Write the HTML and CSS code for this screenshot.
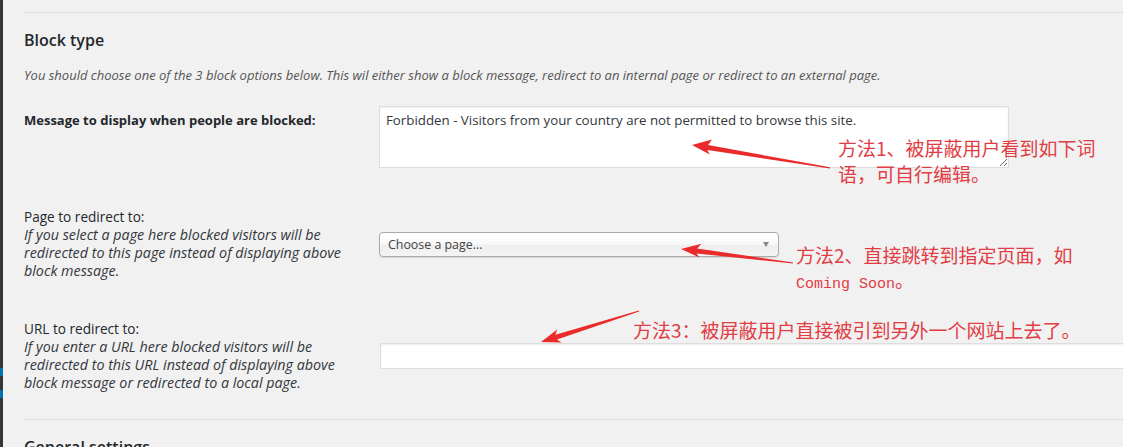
FILE: index.html
```html
<!DOCTYPE html>
<html lang="en">
<head>
    <meta charset="UTF-8">
    <title>Block type settings</title>
    <link rel="stylesheet" href="styles.css">
</head>
<body>
    <div class="admin-menu">
        <span class="menu-mark"></span>
        <span class="menu-mark"></span>
    </div>

    <div class="wrap">
        <hr class="divider">
        <h2 class="section-title">Block type</h2>
        <p class="section-desc">You should choose one of the 3 block options below. This wil either show a block message, redirect to an internal page or redirect to an external page.</p>

        <div class="form-table">
            <div class="field-label field-label-top"><strong>Message to display when people are blocked:</strong></div>
            <div class="field">
                <textarea class="message-box">Forbidden - Visitors from your country are not permitted to browse this site.</textarea>
            </div>

            <div class="field-label">Page to redirect to:<br><em>If you select a page here blocked visitors will be redirected to this page instead of displaying above block message.</em></div>
            <div class="field">
                <div class="select-wrap">
                    <select class="page-select">
                        <option>Choose a page...</option>
                    </select>
                </div>
            </div>

            <div class="field-label">URL to redirect to:<br><em>If you enter a URL here blocked visitors will be redirected to this URL instead of displaying above block message or redirected to a local page.</em></div>
            <div class="field">
                <input type="text" class="url-box">
            </div>
        </div>

        <hr class="divider divider-bottom">
        <h2 class="section-title">General settings</h2>
    </div>

    <!-- red notes drawn over the screenshot -->
    <svg class="arrows" width="1123" height="447" viewBox="0 0 1123 447">
        <polygon points="692,145 712,139.5 708.2,145.1 830.1,167.3 829.9,168.5 707.4,150.1 709.8,154.5" />
        <polygon points="681,249 701.5,243.8 697.2,248.5 793.1,262.5 792.9,263.5 696.6,253.5 699.5,257.6" />
        <polygon points="541,342 557.2,329.4 555.4,334.8 638.8,310.5 639.2,311.5 557,339.6 561.5,342.6" />
    </svg>
    <div class="note note-one">方法1、被屏蔽用户看到如下词<br>语，可自行编辑。</div>
    <div class="note note-two">方法2、直接跳转到指定页面，如<br><span class="mono">Coming Soon</span>。</div>
    <div class="note note-three">方法3：被屏蔽用户直接被引到另外一个网站上去了。</div>
</body>
</html>
```

FILE: styles.css
```css
html, body {
    margin: 0;
    height: 100%;
}
body {
    font-family: "Open Sans", "Noto Sans", sans-serif;
    background-color: #f1f1f1;
    color: #23282d;
    display: flex;
    position: relative;
    overflow: hidden;
}
.admin-menu {
    width: 3px;
    flex-shrink: 0;
    background-color: #32373c;
    display: flex;
    flex-direction: column;
    padding-top: 368px;
    gap: 14px;
}
.menu-mark {
    height: 8px;
    background-color: #0073aa;
}
.wrap {
    flex: 1;
    min-width: 0;
    padding: 12px 0 0 21px;
}
.divider {
    border: 0;
    border-top: 1px solid #dcdcdc;
    margin: 0;
}
.divider-bottom {
    margin-top: 27px;
}
.section-title {
    font-size: 16px;
    line-height: 20px;
    font-weight: 600;
    margin: 17px 0 0;
}
.section-desc {
    font-size: 13px;
    line-height: 18px;
    font-style: italic;
    color: #555;
    margin: 16px 0 0;
}
.form-table {
    display: grid;
    grid-template-columns: 355px 1fr;
    row-gap: 40px;
    margin-top: 22px;
    align-items: center;
}
.field-label {
    font-size: 13.6px;
    line-height: 18px;
    padding-right: 20px;
}
.field-label strong {
    font-size: 13px;
}
.field-label-top {
    align-self: start;
    padding-top: 5px;
}
.field-label em {
    font-size: 14.3px;
    color: #32373c;
}
.message-box {
    display: block;
    width: 630px;
    height: 62px;
    box-sizing: border-box;
    border: 1px solid #ddd;
    box-shadow: inset 0 1px 2px rgba(0, 0, 0, 0.07);
    padding: 3px 6px;
    font-family: "Open Sans", sans-serif;
    font-size: 13.3px;
    line-height: 20px;
    color: #32373c;
    background-color: #fff;
    margin: 0;
}
.select-wrap {
    position: relative;
    width: 400px;
}
.select-wrap::after {
    content: "";
    position: absolute;
    right: 10px;
    top: 10px;
    border-left: 3px solid transparent;
    border-right: 3px solid transparent;
    border-top: 5px solid #888;
}
.page-select {
    appearance: none;
    display: block;
    width: 400px;
    height: 25px;
    border: 1px solid #aaa;
    border-radius: 4px;
    background: linear-gradient(#fff 20%, #f6f6f6 50%, #eee 52%, #f4f4f4);
    box-shadow: 0 1px 1px rgba(0, 0, 0, 0.1);
    font-family: "Open Sans", sans-serif;
    font-size: 12.4px;
    color: #444;
    padding: 0 8px;
    margin: 0;
}
.url-box {
    display: block;
    width: 760px;
    height: 26px;
    box-sizing: border-box;
    border: 1px solid #ddd;
    box-shadow: inset 0 1px 2px rgba(0, 0, 0, 0.07);
    background-color: #fff;
    margin: 0 0 0 1px;
}
.arrows {
    position: absolute;
    top: 0;
    left: 0;
    fill: #eb2b2b;
}
.note {
    position: absolute;
    font-family: "Noto Sans CJK SC", sans-serif;
    font-size: 19px;
    color: #e23c44;
    white-space: nowrap;
}
.note-one {
    left: 838px;
    top: 135px;
    line-height: 26px;
}
.note-two {
    left: 796px;
    top: 242px;
    line-height: 25px;
}
.note-three {
    left: 633px;
    top: 317px;
    line-height: 26px;
}
.mono {
    font-family: "Liberation Mono", monospace;
    font-size: 15px;
}
```
